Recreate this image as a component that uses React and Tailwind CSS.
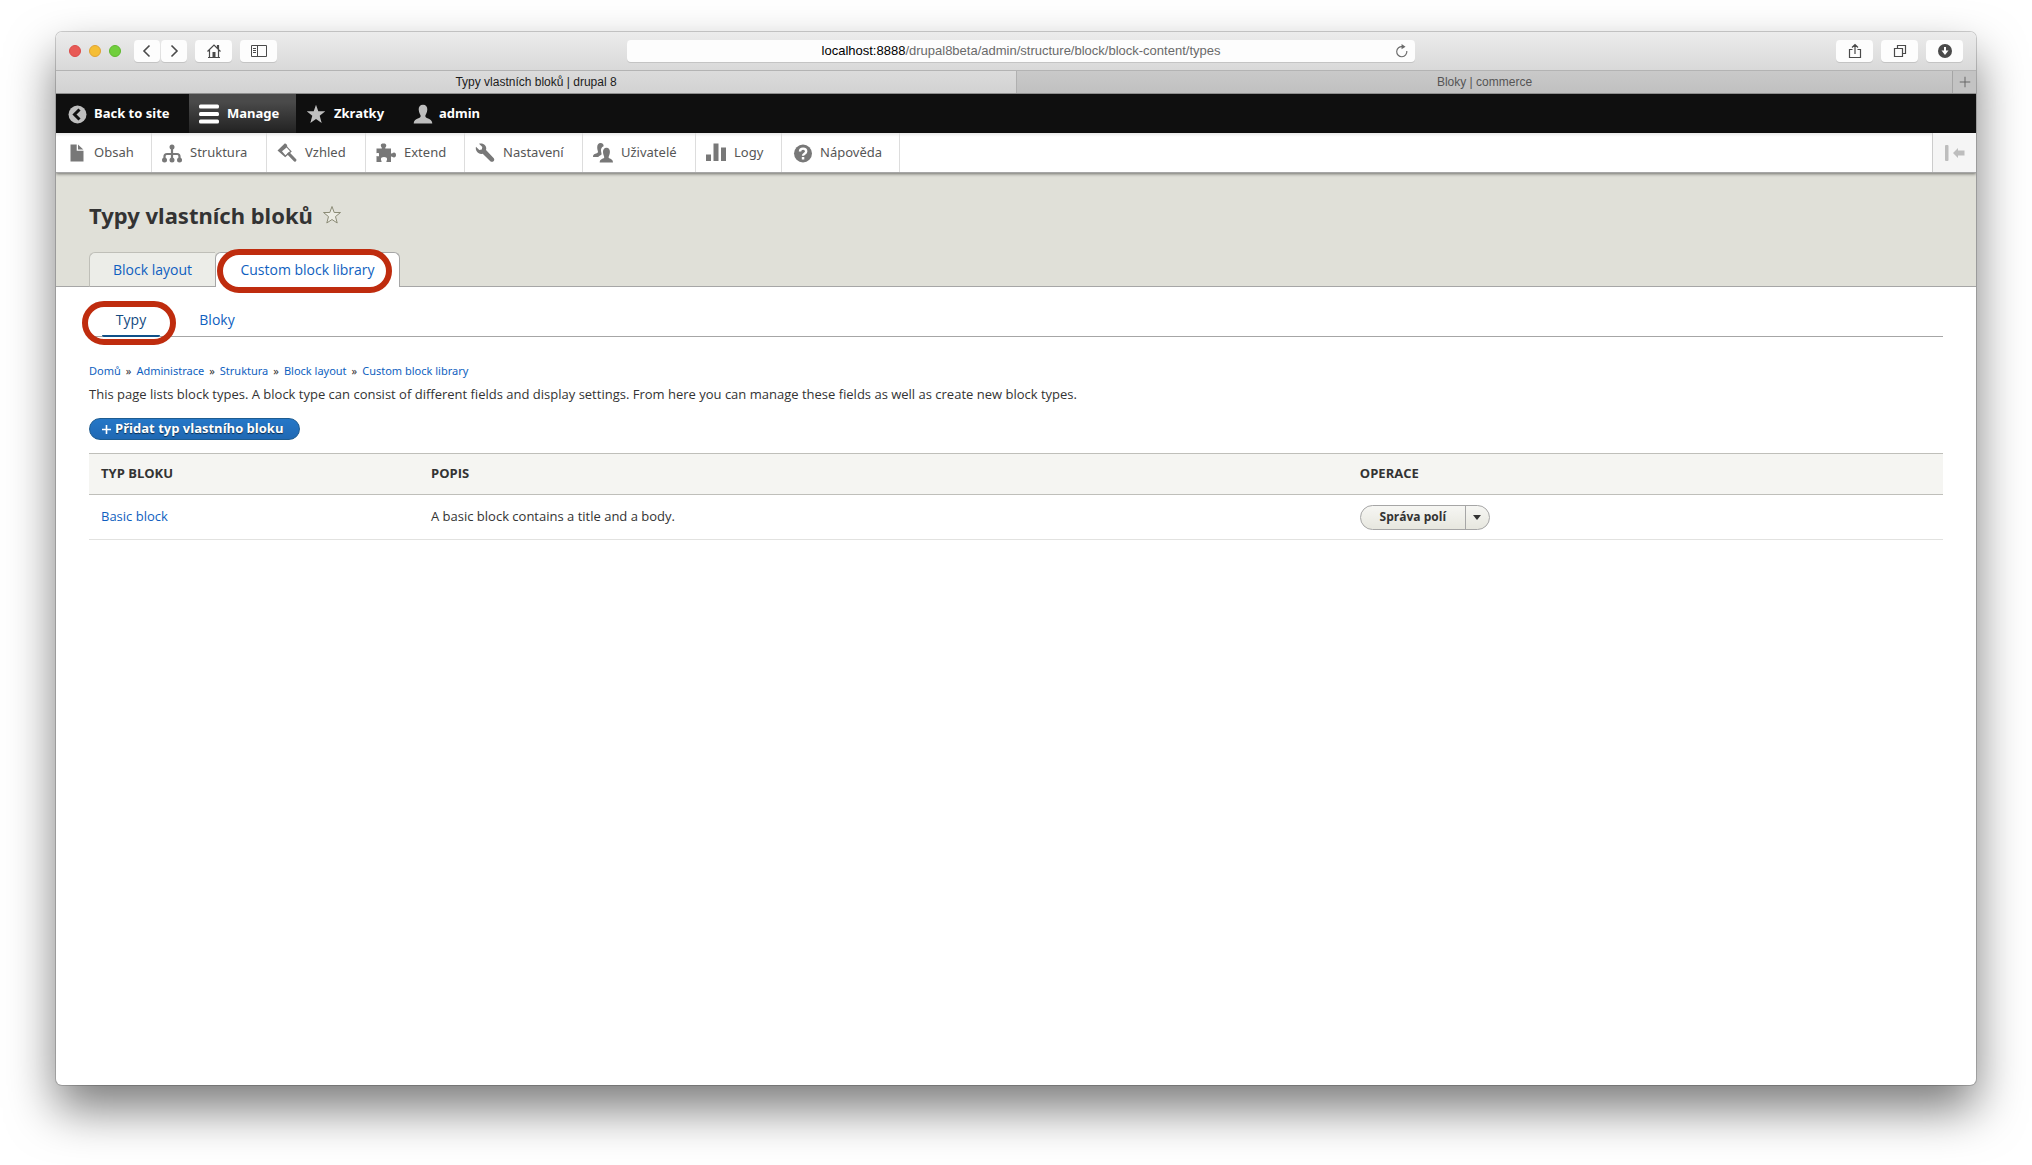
import React from "react";

const MANAGE_ITEMS = [
  { label: "Obsah", icon: FileIcon, width: "w-24" },
  { label: "Struktura", icon: StructureIcon, width: "w-[115px]" },
  { label: "Vzhled", icon: BrushIcon, width: "w-[99px]" },
  { label: "Extend", icon: PuzzleIcon, width: "w-[99px]" },
  { label: "Nastavení", icon: WrenchIcon, width: "w-[118px]" },
  { label: "Uživatelé", icon: PeopleIcon, width: "w-[113px]" },
  { label: "Logy", icon: ChartIcon, width: "w-[86px]" },
  { label: "Nápověda", icon: HelpIcon, width: "w-[118px]" },
];

const BREADCRUMB = ["Domů", "Administrace", "Struktura", "Block layout", "Custom block library"];

function Icon({ children, className = "size-5 shrink-0" }) {
  return (
    <svg viewBox="0 0 20 20" className={className} fill="currentColor" aria-hidden="true">
      {children}
    </svg>
  );
}

function FileIcon() {
  return (
    <Icon>
      <path d="M4.500 1.500h6.200v6.200h6.800v10.800h-13z" />
      <path d="M12 1.500l5.300 5H12z" />
    </Icon>
  );
}

function StructureIcon() {
  return (
    <Icon>
      <circle cx="10" cy="4" r="2.500" />
      <circle cx="2.500" cy="17" r="2.500" />
      <circle cx="10" cy="17" r="2.500" />
      <circle cx="17.500" cy="17" r="2.500" />
      <path d="M10 4v13M2.500 17v-3.500q0-2.500 2.500-2.500h10q2.500 0 2.500 2.500V17" fill="none" stroke="currentColor" strokeWidth="2.200" />
    </Icon>
  );
}

function BrushIcon() {
  return (
    <Icon>
      <path fillRule="evenodd" d="M.5 7.500L8 .3l2 1.500.3 2 4.500 4.700-6.600 5.800zM5 8.300l3.400 4 4.600-4-3.400-3.700z" />
      <path d="M12 11l5.800 6" stroke="currentColor" strokeWidth="3.200" strokeLinecap="round" />
    </Icon>
  );
}

function PuzzleIcon() {
  return (
    <Icon>
      <path d="M.5 5.500h5.300c.5-1-1-1.200-1-2.900C4.800 1 5.700.5 7.500.5s2.800.6 2.800 2.100c0 1.700-1.500 1.900-1 2.900H15v4.800c1.200.9 1.400-.8 3-.8 1.300 0 2 1 2 2.500s-.7 2.500-2 2.500c-1.600 0-1.800-1.500-3-.8v5.300h-4.500c-.5-1 .6-1.500.6-3 0-1.300-1.200-2-3.100-2s-3.100.7-3.100 2c0 1.500 1.100 2 .6 3h-5v-6c1 .2 1.800.6 2.500.2v-2.700C2.300 9.700 1.500 10.200.5 10.200z" />
    </Icon>
  );
}

function WrenchIcon() {
  return (
    <Icon>
      <path d="M1 3.700L4.300 7l2.500-.4L7.300 4 4 .8C6.200.2 8.600.6 10 2.200c1.300 1.400 1.500 3 1 4.800l7.800 8.200c1.600 2-1.300 4.800-3.200 3.200L7.700 10.700c-1.900.6-3.700.2-5-1.100C1.100 8 .4 6 1 3.700z" />
    </Icon>
  );
}

function PeopleIcon() {
  return (
    <Icon>
      <path d="M7.500 0c2.300 0 3.300 1.500 3.100 3.300C8.500 4.200 7.800 6 8 8c.2 1.600.8 2.500.5 3.600-.3.900-2.400 1.200-3.300 2.400H0c0-3.300 2.800-3 4.500-4.200 1.300-1-.3-2.300-.3-5.600C4.200 1.700 5.400 0 7.500 0z" />
      <path d="M13.500 4.800c2.400 0 3.400 1.700 3.400 4 0 3.600-1.900 5.200-1 6.300.8 1 4.100.7 4.100 4.500H6.700c0-3.800 3.500-3.500 4.300-4.500.9-1.100-1-2.700-1-6.300 0-2.300 1.100-4 3.500-4z" />
    </Icon>
  );
}

function ChartIcon() {
  return (
    <Icon>
      <rect x="0" y="11.500" width="5" height="6.500" />
      <rect x="7.500" y="0.500" width="5" height="17.500" />
      <rect x="15" y="4.500" width="5" height="13.500" />
    </Icon>
  );
}

function HelpIcon() {
  return (
    <Icon>
      <circle cx="11" cy="10.500" r="9" />
      <path d="M8 8.600c0-4 6.200-3.800 6.200-.2 0 2.300-3.200 2.200-3.200 4.300" fill="none" stroke="#fff" strokeWidth="2.400" />
      <rect x="9.800" y="14" width="2.500" height="2.500" fill="#fff" />
    </Icon>
  );
}

function BackIcon() {
  return (
    <Icon>
      <circle cx="9.500" cy="10.500" r="9" />
      <path d="M11.500 5.500l-5 5 5 5" fill="none" stroke="#0f0f0f" strokeWidth="3" />
    </Icon>
  );
}

function MenuIcon() {
  return (
    <Icon>
      <rect y="0.500" width="20" height="4" rx="1.500" />
      <rect y="8" width="20" height="4" rx="1.500" />
      <rect y="15.500" width="20" height="4" rx="1.500" />
    </Icon>
  );
}

function StarIcon() {
  return (
    <Icon>
      <path d="M10 .7l2.300 6.600h7l-5.600 4.400 2 7.300L10 15l-5.700 4 2-7.300L.7 7.300h7z" />
    </Icon>
  );
}

function PersonIcon() {
  return (
    <Icon>
      <path d="M10 .7c3 0 4.500 2 4.300 5-.2 3.500-2 4.800-2 6.300 0 3 7 2 7 7.500H.7c0-5.500 7-4.500 7-7.500 0-1.500-1.800-2.800-2-6.300-.2-3 1.300-5 4.300-5z" />
    </Icon>
  );
}

function ChromeButton({ label, className, children }) {
  return (
    <button
      type="button"
      aria-label={label}
      className={`flex h-[22px] items-center justify-center rounded bg-[#fdfdfd] text-[#4a4a4a] shadow-[0_1px_0_#c4c4c4] ${className}`}
    >
      {children}
    </button>
  );
}

function LineIcon({ children, className = "size-4" }) {
  return (
    <svg viewBox="0 0 16 16" className={className} fill="none" stroke="currentColor" strokeWidth="1" aria-hidden="true">
      {children}
    </svg>
  );
}

function BrowserBar() {
  return (
    <div className="flex h-[39px] items-center border-b border-[#b3b3b3] bg-linear-to-b from-[#ececec] to-[#d9d9d9] px-[13px]">
      <div className="flex flex-1 items-center">
        <div className="flex gap-2">
          <span className="size-3 rounded-full border border-[#dc4a48] bg-[#e85a56]" />
          <span className="size-3 rounded-full border border-[#e0a333] bg-[#f5be35]" />
          <span className="size-3 rounded-full border border-[#5fb82f] bg-[#71cf3d]" />
        </div>
        <ChromeButton label="Zpět" className="ml-[13px] w-[26px]">
          <LineIcon><path d="M10.500 2.500L5 8l5.500 5.500" strokeWidth="1.600" /></LineIcon>
        </ChromeButton>
        <ChromeButton label="Vpřed" className="ml-px w-[26px]">
          <LineIcon><path d="M5.500 2.500L11 8l-5.500 5.500" strokeWidth="1.600" /></LineIcon>
        </ChromeButton>
        <ChromeButton label="Domů" className="ml-2 w-[37px]">
          <LineIcon>
            <path d="M1.500 8.500L8 2l6.500 6.500M3.500 7v7.500h9V7M2 14.500h12M11.500 5V2.500h1V6" strokeWidth="1.200" />
            <rect x="6.500" y="9" width="3" height="5.500" fill="currentColor" stroke="none" />
          </LineIcon>
        </ChromeButton>
        <ChromeButton label="Postranní panel" className="ml-2 w-[37px]">
          <LineIcon>
            <path d="M.5 2.500h15v11H.5zM6.500 2.500v11M2 5.500h3M2 7.500h3M2 9.500h3" />
          </LineIcon>
        </ChromeButton>
      </div>
      <div className="ml-[10px] flex h-[22px] w-[41.6%] items-center rounded bg-[#fdfdfd] pr-[6px] pl-5 text-[13px] shadow-[0_1px_0_#c4c4c4]">
        <p className="flex-1 text-center text-[#6a6a6a]">
          <span className="text-black">localhost:8888</span>/drupal8beta/admin/structure/block/block-content/types
        </p>
        <button type="button" aria-label="Načíst znovu" className="text-[#6a6a6a]">
          <LineIcon className="size-[14px]">
            <path d="M8.500 3A5.800 5.800 0 1 0 13.500 8" strokeWidth="1.300" />
            <path d="M7.500 0l4.500 3-4.500 3z" fill="currentColor" stroke="none" />
          </LineIcon>
        </button>
      </div>
      <div className="flex flex-1 justify-end gap-2">
        <ChromeButton label="Sdílet" className="w-[37px]">
          <LineIcon><path d="M5.500 6.500h-3v8h11v-8h-3M8 11V1.500M5 4.500l3-3 3 3" strokeWidth="1.200" /></LineIcon>
        </ChromeButton>
        <ChromeButton label="Panely" className="w-[37px]">
          <LineIcon><path d="M2.500 5.500h8v8h-8zM5.500 5.500v-3h8v8h-3" strokeWidth="1.200" /></LineIcon>
        </ChromeButton>
        <ChromeButton label="Stahování" className="w-[37px]">
          <LineIcon>
            <circle cx="8" cy="8" r="7" fill="currentColor" stroke="none" />
            <path d="M8 4v4" stroke="#fff" strokeWidth="2" />
            <path d="M4.500 7.500h7L8 12z" fill="#fff" stroke="none" />
          </LineIcon>
        </ChromeButton>
      </div>
    </div>
  );
}

function TabBar() {
  return (
    <div className="flex h-[23px] border-b border-[#8f8f8f] text-xs">
      <button type="button" className="w-1/2 bg-linear-to-b from-[#dbdbdb] to-[#d2d2d2] text-[#1c1c1c]">
        Typy vlastních bloků | drupal 8
      </button>
      <button type="button" className="flex-1 border-l border-[#b0b0b0] bg-linear-to-b from-[#c9c9c9] to-[#c0c0c0] text-[#555]">
        Bloky | commerce
      </button>
      <button type="button" aria-label="Nový panel" className="flex w-6 items-center justify-center border-l border-[#a5a5a5] bg-[#c3c3c3] text-[#666]">
        <LineIcon className="size-3"><path d="M8 1v14M1 8h14" strokeWidth="1.300" /></LineIcon>
      </button>
    </div>
  );
}

function AdminBar() {
  return (
    <nav aria-label="Administrace" className="flex h-[39px] bg-[#0f0f0f] text-[13px] font-bold text-white">
      <a href="#site" className="flex w-[133px] items-center gap-[6px] pl-3">
        <span className="text-[#bebebe]"><BackIcon /></span>
        Back to site
      </a>
      <a href="#manage" className="flex w-[107px] items-center gap-2 bg-linear-to-b from-[#4a4a4a] from-20% to-[#222] pl-[10px]">
        <MenuIcon />
        Manage
      </a>
      <a href="#shortcuts" className="flex w-[107px] items-center gap-2 pl-[10px]">
        <span className="text-[#bebebe]"><StarIcon /></span>
        Zkratky
      </a>
      <a href="#user" className="flex items-center gap-[6px] pl-[10px]">
        <span className="text-[#bebebe]"><PersonIcon /></span>
        admin
      </a>
    </nav>
  );
}

function ManageTray() {
  return (
    <nav aria-label="Správa" className="relative z-10 flex h-10 border-b border-[#a6a6a6] bg-linear-to-b from-[#e8e8e8] to-white to-10% text-[13px] text-[#565656] shadow-[0_1px_3px_rgba(0,0,0,0.5)]">
      {MANAGE_ITEMS.map(({ label, icon: Glyph, width }) => (
        <a key={label} href="#admin" className={`flex items-center gap-2 border-r border-[#ddd] pl-[10px] ${width}`}>
          <span className="text-[#787878]"><Glyph /></span>
          {label}
        </a>
      ))}
      <button type="button" aria-label="Svislá orientace" className="ml-auto flex w-11 items-center justify-center border-l border-[#ccc] bg-[#f5f5f5] text-[#bdbdbd]">
        <Icon>
          <rect x="0" y="2" width="3.500" height="16" rx="1" />
          <path d="M8 10l5-5v2.500h6.500v5H13V15z" />
        </Icon>
      </button>
    </nav>
  );
}

function Ring({ className }) {
  return <span aria-hidden="true" className={`pointer-events-none absolute z-10 rounded-full border-6 border-[#bf2c0e] ${className}`} />;
}

function PageHeader() {
  return (
    <header className="flex h-[114px] flex-col justify-between border-b border-[#a6a6a6] bg-[#e0e0d8] pt-[26px] pl-[33px]">
      <div className="flex items-center gap-[9px]">
        <h1 className="font-['Noto_Sans',sans-serif] text-[22px] leading-8 font-bold text-[#333]">Typy vlastních bloků</h1>
        <button type="button" aria-label="Přidat do zkratek" className="text-[#8b8b76]">
          <svg viewBox="0 0 20 20" className="size-5" fill="#ecece4" stroke="currentColor" strokeWidth="1" aria-hidden="true">
            <path d="M10 1.500l2.200 6h6.300l-5 4.100 1.700 6.400L10 14.500 4.800 18l1.700-6.400-5-4.100h6.300z" />
          </svg>
        </button>
      </div>
      <div className="-mb-px flex text-sm text-[#0f5fc0]">
        <a href="#layout" className="flex h-[35px] w-[126px] items-center justify-center rounded-tl-md border border-r-0 border-[#bfbfb8] border-b-[#a6a6a6] bg-[#ecede8]">
          Block layout
        </a>
        <a href="#library" className="relative flex h-[35px] w-[185px] items-center justify-center rounded-t-md border border-b-0 border-[#a6a6a6] bg-white">
          Custom block library
          <Ring className="-top-1 left-px h-11 w-[175px]" />
        </a>
      </div>
    </header>
  );
}

function PageContent() {
  return (
    <main className="grow px-[33px] text-[#333]">
      <nav aria-label="Sekundární záložky" className="flex h-[50px] items-end border-b border-[#a6a6a6] pl-[13px] text-sm leading-5 text-[#0f5fc0]">
        <a href="#types" className="relative -mb-px flex h-[35px] w-[58px] justify-center rounded-b-xs border-b-2 border-[#0f5088] pt-2 text-[#134a80]">
          Typy
          <Ring className="-top-px -left-5 h-11 w-[94px]" />
        </a>
        <a href="#blocks" className="flex h-[34px] w-[114px] justify-center pt-2">Bloky</a>
      </nav>
      <nav aria-label="Drobečková navigace" className="mt-6 flex gap-[5px] font-['Noto_Sans',sans-serif] text-[11px] leading-5">
        {BREADCRUMB.map((item, i) => (
          <React.Fragment key={item}>
            {i > 0 && <span>»</span>}
            <a href="#crumb" className="text-[#0f5fc0]">{item}</a>
          </React.Fragment>
        ))}
      </nav>
      <p className="mt-[3px] text-[13px] leading-5">
        This page lists block types. A block type can consist of different fields and display settings. From here you can manage these fields as well as create new block types.
      </p>
      <a
        href="#add"
        className="mt-[14px] flex h-[22px] w-fit items-center gap-1 rounded-full border border-[#1e5c90] bg-linear-to-b from-[#2577c7] to-[#2069b4] pr-4 pl-3 text-[13px] font-bold text-white text-shadow-[0_1px_1px_rgba(0,0,0,0.6)]"
      >
        <svg viewBox="0 0 10 10" className="size-[9px]" stroke="currentColor" strokeWidth="1.800" aria-hidden="true">
          <path d="M5 0v10M0 5h10" />
        </svg>
        Přidat typ vlastního bloku
      </a>
      <table className="mt-[13px] w-full table-fixed text-left text-[13px]">
        <thead>
          <tr className="h-[41px] border-y border-[#bfbfba] bg-[#f5f5f2] uppercase">
            <th className="w-[17.8%] px-3">Typ bloku</th>
            <th className="w-[50.1%] px-3">Popis</th>
            <th className="px-3">Operace</th>
          </tr>
        </thead>
        <tbody>
          <tr className="h-[45px] border-b border-[#e2e2e0]">
            <td className="px-3"><a href="#basic" className="text-[#0f5fc0]">Basic block</a></td>
            <td className="px-3">A basic block contains a title and a body.</td>
            <td className="px-3">
              <div className="flex h-[25px] w-[130px] rounded-full border border-[#a6a6a6] bg-linear-to-b from-[#f6f6f3] to-[#e7e7df] text-xs">
                <button type="button" className="grow font-bold">Správa polí</button>
                <button type="button" aria-label="Další operace" className="flex w-6 items-center justify-center border-l border-[#a6a6a6] pr-px">
                  <svg viewBox="0 0 8 5" className="h-[5px] w-2" fill="currentColor" aria-hidden="true"><path d="M0 0h8L4 5z" /></svg>
                </button>
              </div>
            </td>
          </tr>
        </tbody>
      </table>
    </main>
  );
}

export default function App() {
  return (
    <div className="flex min-h-screen flex-col overflow-hidden bg-white px-14 pt-8 pb-20">
      <div className="flex grow flex-col overflow-hidden rounded-md bg-white shadow-[0_24px_48px_rgba(0,0,0,0.52),0_0_0_1px_rgba(0,0,0,0.18)]">
        <div className="font-['Liberation_Sans',sans-serif]">
          <BrowserBar />
          <TabBar />
        </div>
        <div className="font-['Noto_Sans',sans-serif]">
          <AdminBar />
          <ManageTray />
        </div>
        <div className="flex grow flex-col font-['Open_Sans',sans-serif]">
          <PageHeader />
          <PageContent />
        </div>
      </div>
    </div>
  );
}
